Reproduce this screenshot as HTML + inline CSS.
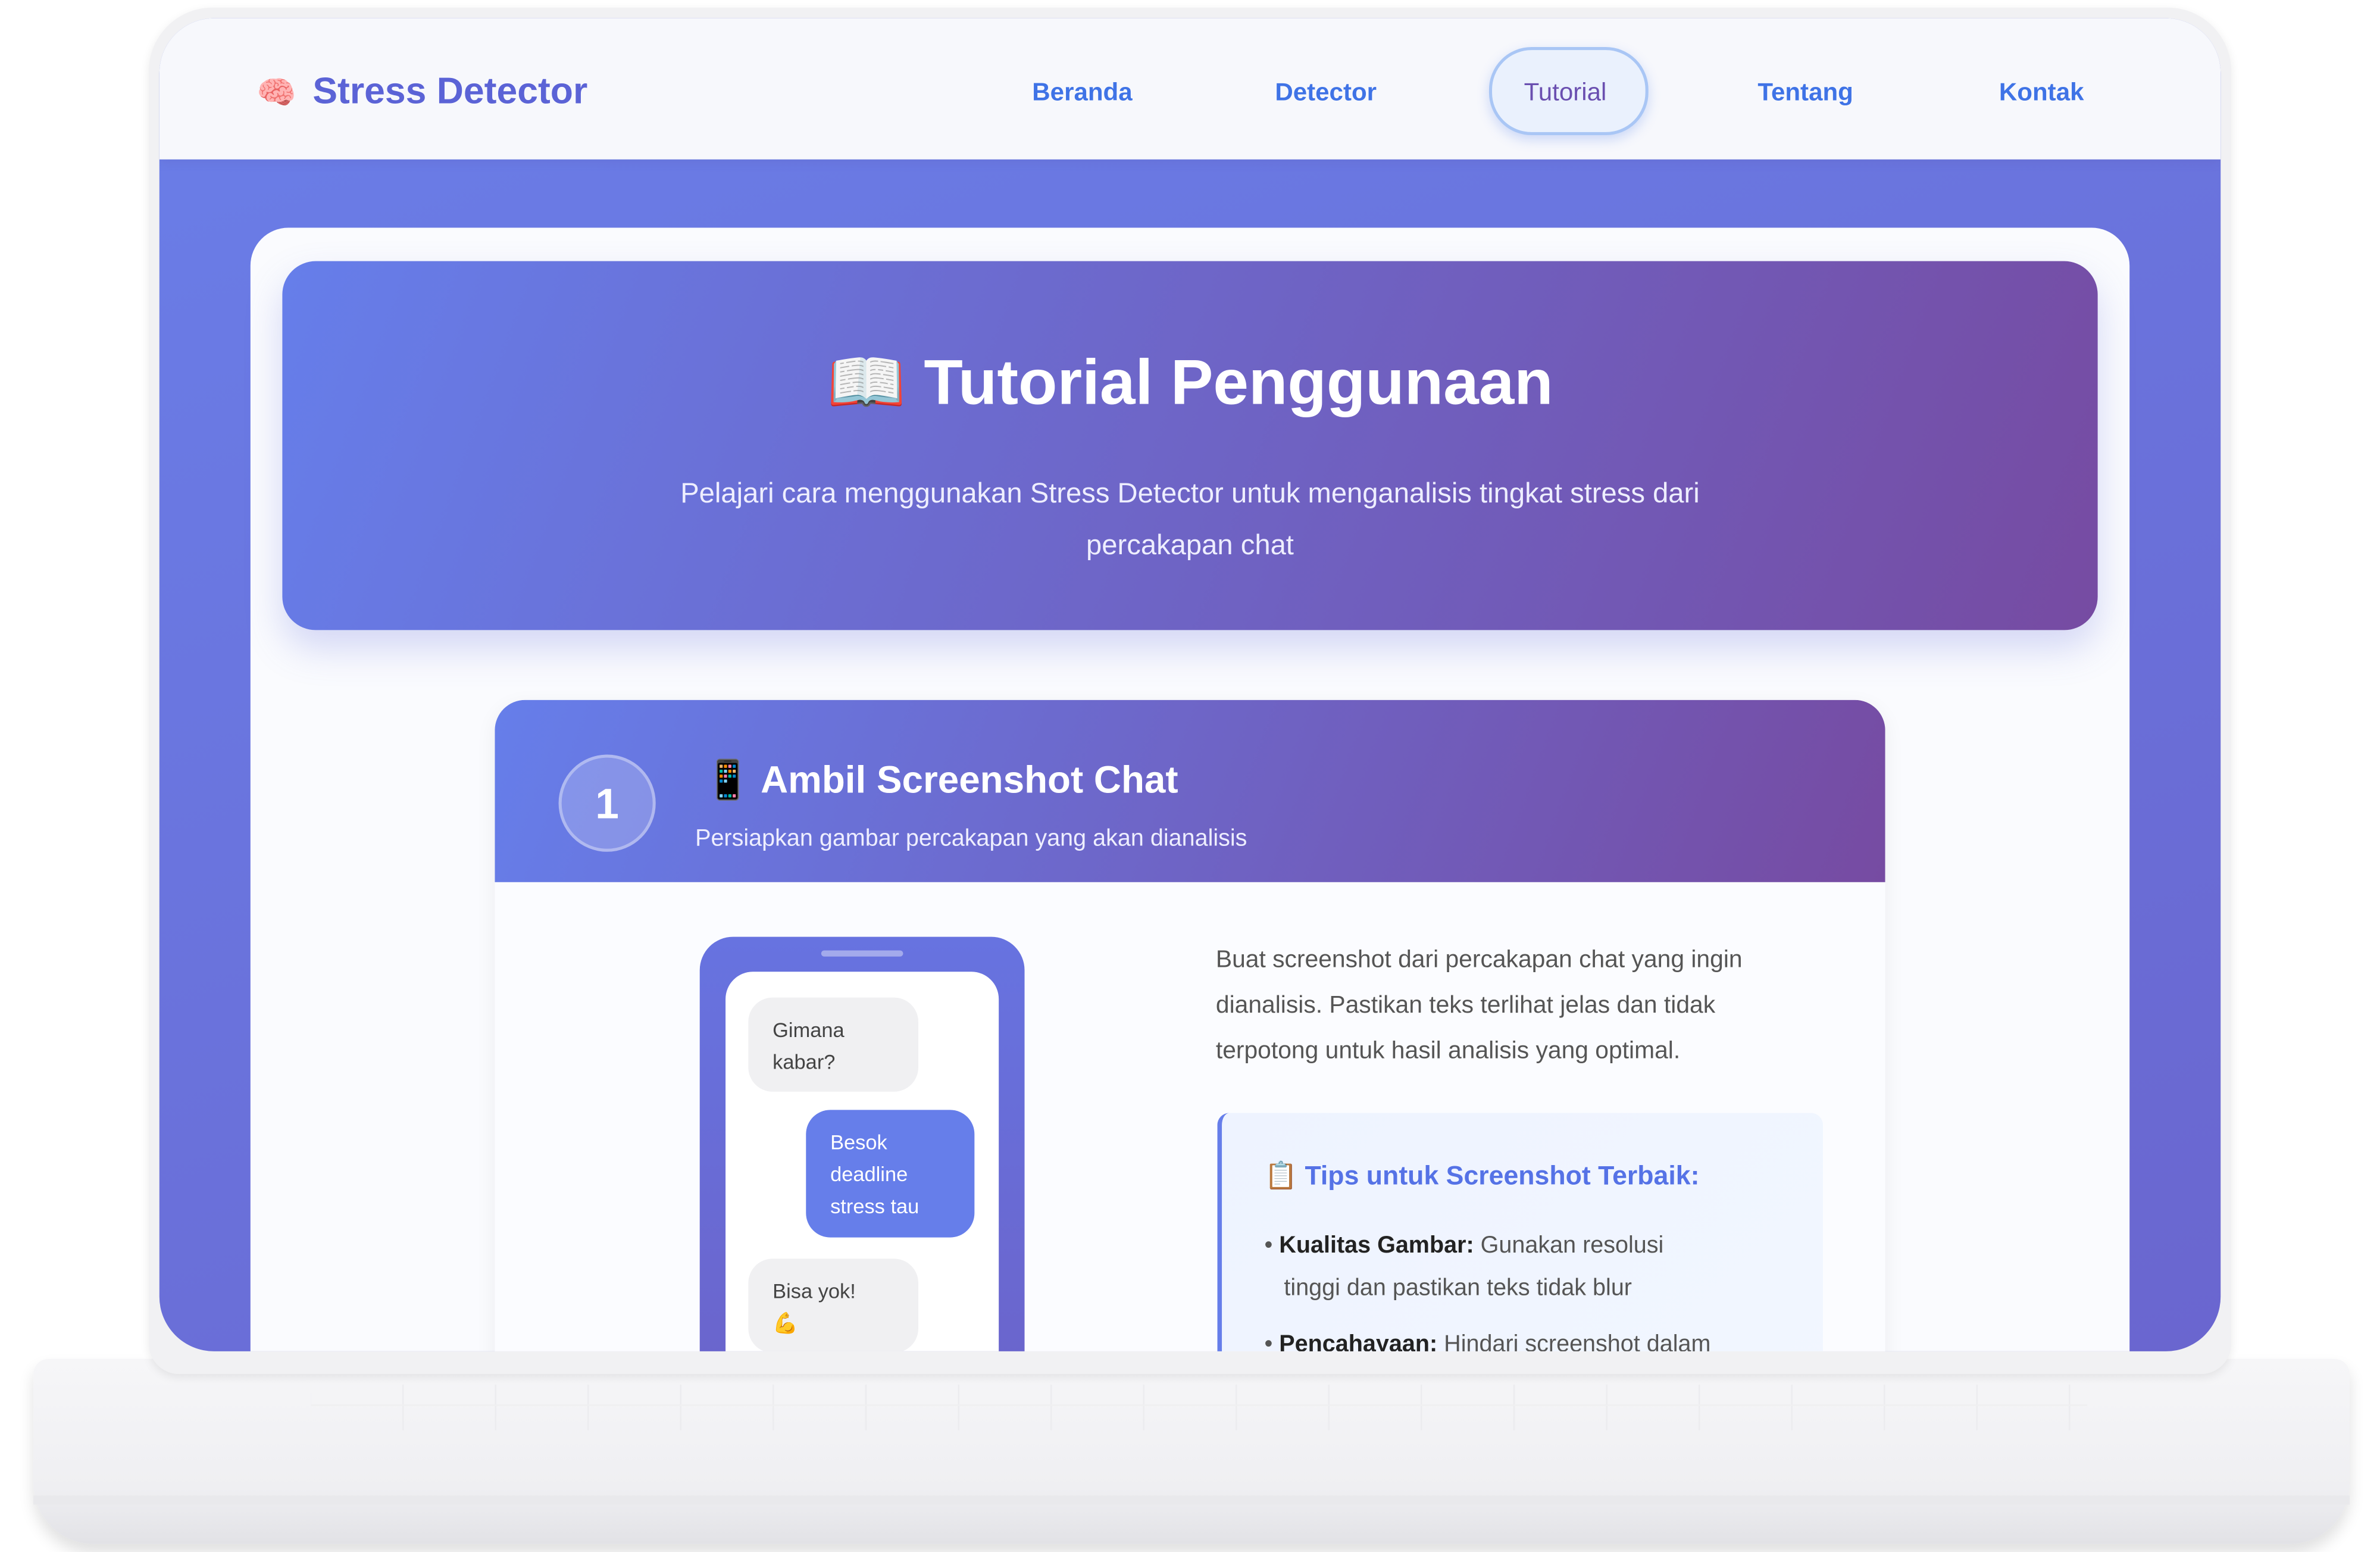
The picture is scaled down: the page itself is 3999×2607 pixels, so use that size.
<!DOCTYPE html>
<html><head><meta charset="utf-8"><style>
html,body{margin:0;padding:0;background:#fff;width:3999px;height:2605px;overflow:hidden}
#w{position:absolute;left:0;top:0;width:1568px;height:1022px;transform:scale(2.5504);transform-origin:0 0;font-family:"Liberation Sans","Noto Sans CJK SC",sans-serif}
.a{position:absolute}
</style></head><body><div id="w">
<div class="a" style="left:22px;top:895px;width:1526px;height:122px;border-radius:10px 10px 40px 40px;background:linear-gradient(#f6f6f8,#efeff2 70%,#e2e2e6);box-shadow:0 6px 10px rgba(0,0,0,.12)"></div>
<div class="a" style="left:22px;top:985px;width:1526px;height:6px;background:#e9e9ec"></div>
<div class="a" style="left:205px;top:912px;width:1170px;height:30px;background:repeating-linear-gradient(90deg,transparent 0 60px,#ececef 60px 61px)"></div>
<div class="a" style="left:205px;top:925px;width:1170px;height:1px;background:#efeff1"></div>
<div class="a" style="left:98px;top:5px;width:1372px;height:900px;border-radius:42px 42px 20px 20px;background:#f1f1f3;box-shadow:0 2px 6px rgba(0,0,0,.08)"></div>
<div class="a" style="left:105px;top:12px;width:1358px;height:878px;border-radius:36px;overflow:hidden;background:linear-gradient(160deg,#6a7ee8,#6a66cf)">
 <div class="a" style="left:0;top:0;width:1358px;height:93px;background:#f7f8fc;box-shadow:0 2px 6px rgba(80,80,160,.15)">
  <div class="a" style="left:64px;top:38px;font-size:21px">🧠</div>
  <div class="a" style="left:101px;top:35px;font-size:24.5px;font-weight:bold;color:#5b63d6">Stress Detector</div>
  <div class="a" style="left:575px;top:40px;font-size:16.5px;font-weight:bold;color:#3f73e6">Beranda</div>
  <div class="a" style="left:735px;top:40px;font-size:16.5px;font-weight:bold;color:#3f73e6">Detector</div>
  <div class="a" style="left:876px;top:19px;width:101px;height:54px;border:2px solid #a9c6f5;border-radius:28px;background:#eaf1fd;box-shadow:0 3px 8px rgba(100,140,240,.3)"></div>
  <div class="a" style="left:899px;top:40px;font-size:16.5px;color:#6a4fb0">Tutorial</div>
  <div class="a" style="left:1053px;top:40px;font-size:16.5px;font-weight:bold;color:#3f73e6">Tentang</div>
  <div class="a" style="left:1212px;top:40px;font-size:16.5px;font-weight:bold;color:#3f73e6">Kontak</div>
 </div>
 <div class="a" style="left:60px;top:138px;width:1238px;height:800px;border-radius:25px;background:#fafbfe">
  <div class="a" style="left:21px;top:22px;width:1196px;height:243px;border-radius:22px;background:linear-gradient(110deg,#667eea,#764ba2);box-shadow:0 12px 24px rgba(100,110,220,.25)">
   <div class="a" style="left:0;top:56px;width:1196px;text-align:center;color:#fff;font-size:42px;font-weight:bold">📖 Tutorial Penggunaan</div>
   <div class="a" style="left:218px;top:136px;width:760px;text-align:center;color:#eef;font-size:18.5px;line-height:34px">Pelajari cara menggunakan Stress Detector untuk menganalisis tingkat stress dari percakapan chat</div>
  </div>
  <div class="a" style="left:161px;top:311px;width:916px;height:500px;border-radius:20px;background:#fbfcff;box-shadow:0 4px 14px rgba(0,0,0,.06);overflow:hidden">
   <div class="a" style="left:0;top:0;width:916px;height:120px;background:linear-gradient(110deg,#667eea,#764ba2)">
    <div class="a" style="left:42px;top:36px;width:60px;height:60px;border-radius:50%;border:2px solid rgba(255,255,255,.35);background:rgba(255,255,255,.2);color:#fff;font-size:28px;font-weight:bold;text-align:center;line-height:62px">1</div>
    <div class="a" style="left:138px;top:39px;color:#fff;font-size:25px;font-weight:bold">📱 Ambil Screenshot Chat</div>
    <div class="a" style="left:132px;top:83px;color:#eef;font-size:15.5px">Persiapkan gambar percakapan yang akan dianalisis</div>
   </div>
   <div class="a" style="left:135px;top:156px;width:214px;height:400px;border-radius:22px;background:linear-gradient(#6773e0,#6c5fc4)">
    <div class="a" style="left:80px;top:9px;width:54px;height:4px;border-radius:2px;background:rgba(255,255,255,.4)"></div>
    <div class="a" style="left:17px;top:23px;width:180px;height:380px;border-radius:18px;background:#fff">
     <div class="a" style="left:15px;top:17px;width:112px;height:62px;border-radius:16px;background:#f0f0f2;font-size:13.5px;color:#444;padding:11px 16px;box-sizing:border-box;line-height:21px">Gimana kabar?</div>
     <div class="a" style="left:53px;top:91px;width:111px;height:84px;border-radius:16px;background:#667eea;font-size:13.5px;color:#fff;padding:11px 16px;box-sizing:border-box;line-height:21px">Besok deadline stress tau</div>
     <div class="a" style="left:15px;top:189px;width:112px;height:62px;border-radius:16px;background:#f0f0f2;font-size:13.5px;color:#444;padding:11px 16px;box-sizing:border-box;line-height:21px">Bisa yok!<br>💪</div>
    </div>
   </div>
   <div class="a" style="left:475px;top:157px;width:400px;font-size:16px;color:#555;line-height:30px">Buat screenshot dari percakapan chat yang ingin dianalisis. Pastikan teks terlihat jelas dan tidak terpotong untuk hasil analisis yang optimal.</div>
   <div class="a" style="left:476px;top:272px;width:396px;height:250px;border-left:3px solid #667eea;border-radius:8px;background:linear-gradient(135deg,#eef3ff,#f2f7ff)">
    <div class="a" style="left:28px;top:31px;font-size:17.5px;font-weight:bold;color:#5572e6">📋 Tips untuk Screenshot Terbaik:</div>
    <div class="a" style="left:28px;top:74px;width:330px;font-size:15.5px;color:#555;line-height:28px">•&nbsp;<b style="color:#222">Kualitas Gambar:</b> Gunakan resolusi<br>&nbsp;&nbsp;&nbsp;tinggi dan pastikan teks tidak blur</div>
    <div class="a" style="left:28px;top:139px;width:360px;font-size:15.5px;color:#555;line-height:28px">•&nbsp;<b style="color:#222">Pencahayaan:</b> Hindari screenshot dalam</div>
   </div>
  </div>
 </div>
</div>
</div></body></html>
